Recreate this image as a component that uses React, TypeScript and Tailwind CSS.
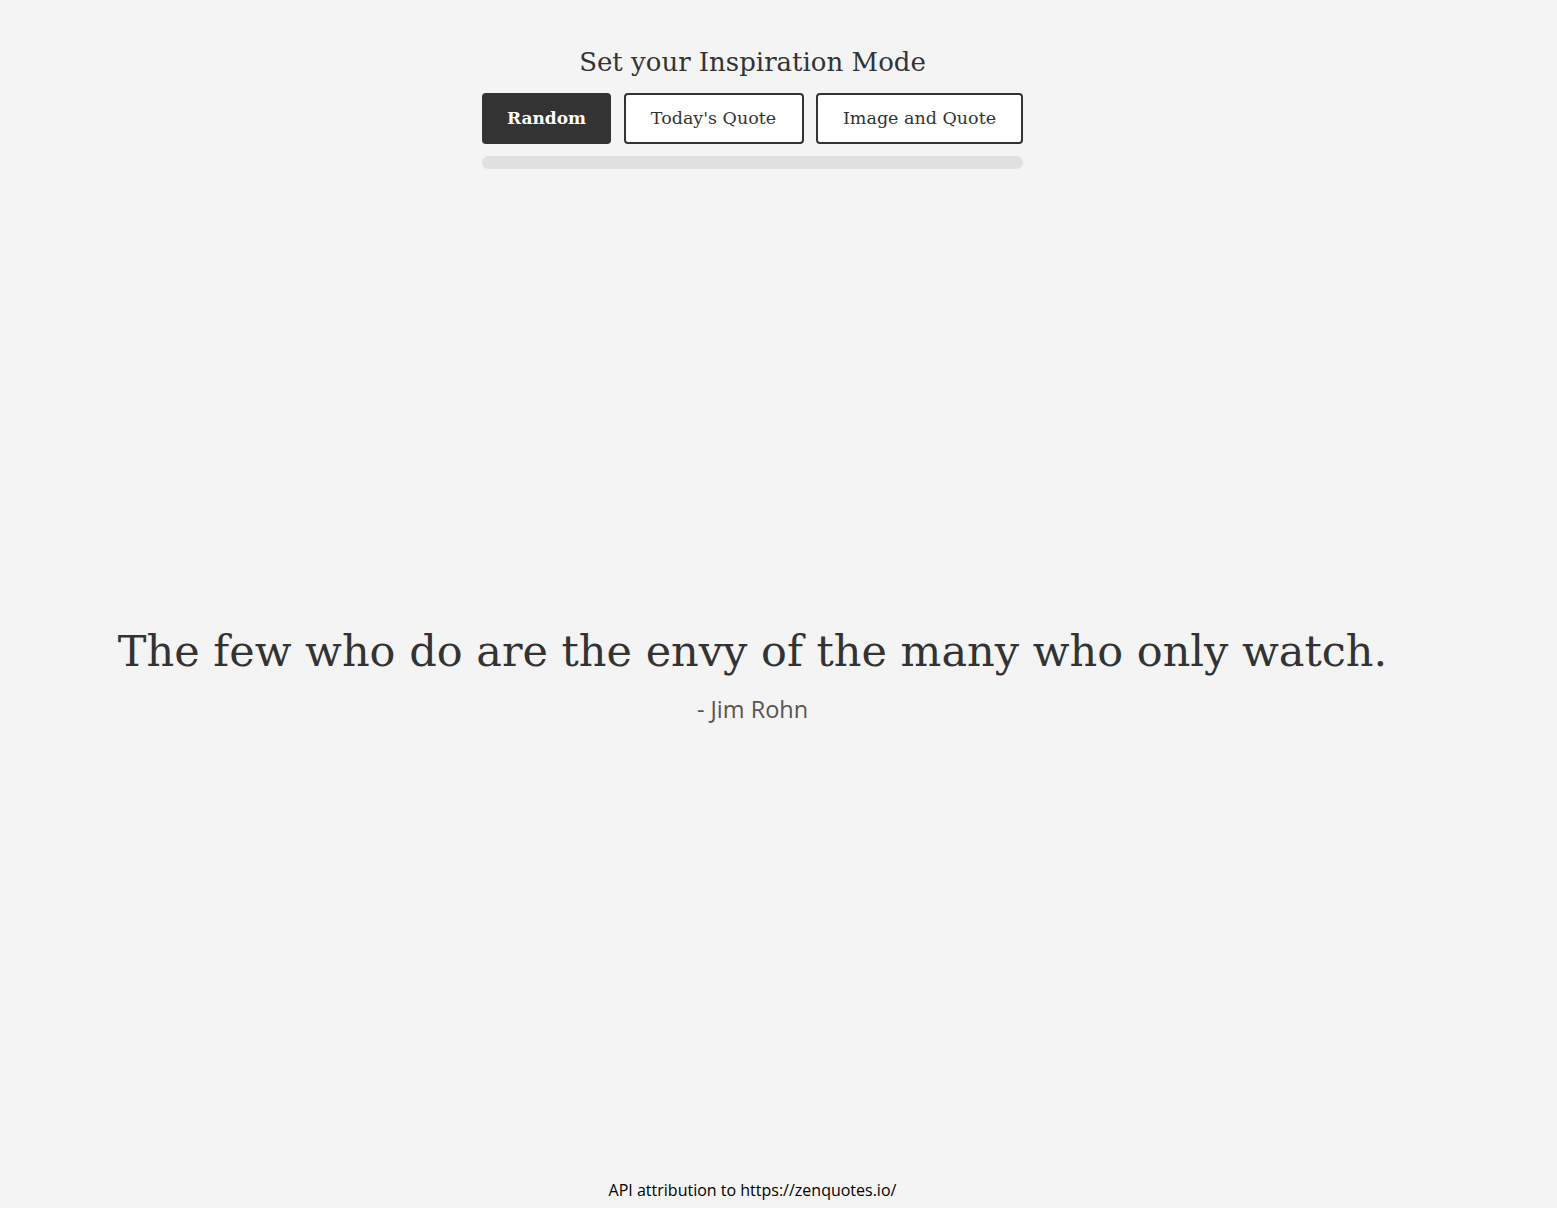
const serif = "font-['DejaVu_Serif',Georgia,serif]";

export default function App() {
  return (
    <div className="flex min-h-screen flex-col items-center bg-[#f4f4f4] pr-[52px] text-[#333]">
      <header className="flex flex-col items-center pt-[44px]">
        <h1 className={`${serif} text-[26px] leading-[36px]`}>Set your Inspiration Mode</h1>
        <div className="mt-[13px] flex gap-[12.5px]">
          <button className={`${serif} h-[51px] w-[129px] rounded-[4px] bg-[#333] text-[17px] font-bold text-white`}>
            Random
          </button>
          <button className={`${serif} h-[51px] w-[180px] rounded-[4px] border-2 border-[#333] bg-white text-[17.5px]`}>
            Today's Quote
          </button>
          <button className={`${serif} h-[51px] w-[207px] rounded-[4px] border-2 border-[#333] bg-white text-[17.5px]`}>
            Image and Quote
          </button>
        </div>
        <div className="mt-[12px] h-[13px] w-[541px] rounded-full bg-[#e0e0e0]" />
      </header>

      <main className="flex flex-1 flex-col items-center justify-center pt-[2px]">
        <p className={`${serif} text-[43px] leading-[60px]`}>
          The few who do are the envy of the many who only watch.
        </p>
        <p className="mt-[11px] font-['Open_Sans',sans-serif] text-[23.5px] text-[#555]">- Jim Rohn</p>
      </main>

      <footer className="pb-[6px] font-['Open_Sans',sans-serif] text-[16px] text-black">
        API attribution to https://zenquotes.io/
      </footer>
    </div>
  );
}
